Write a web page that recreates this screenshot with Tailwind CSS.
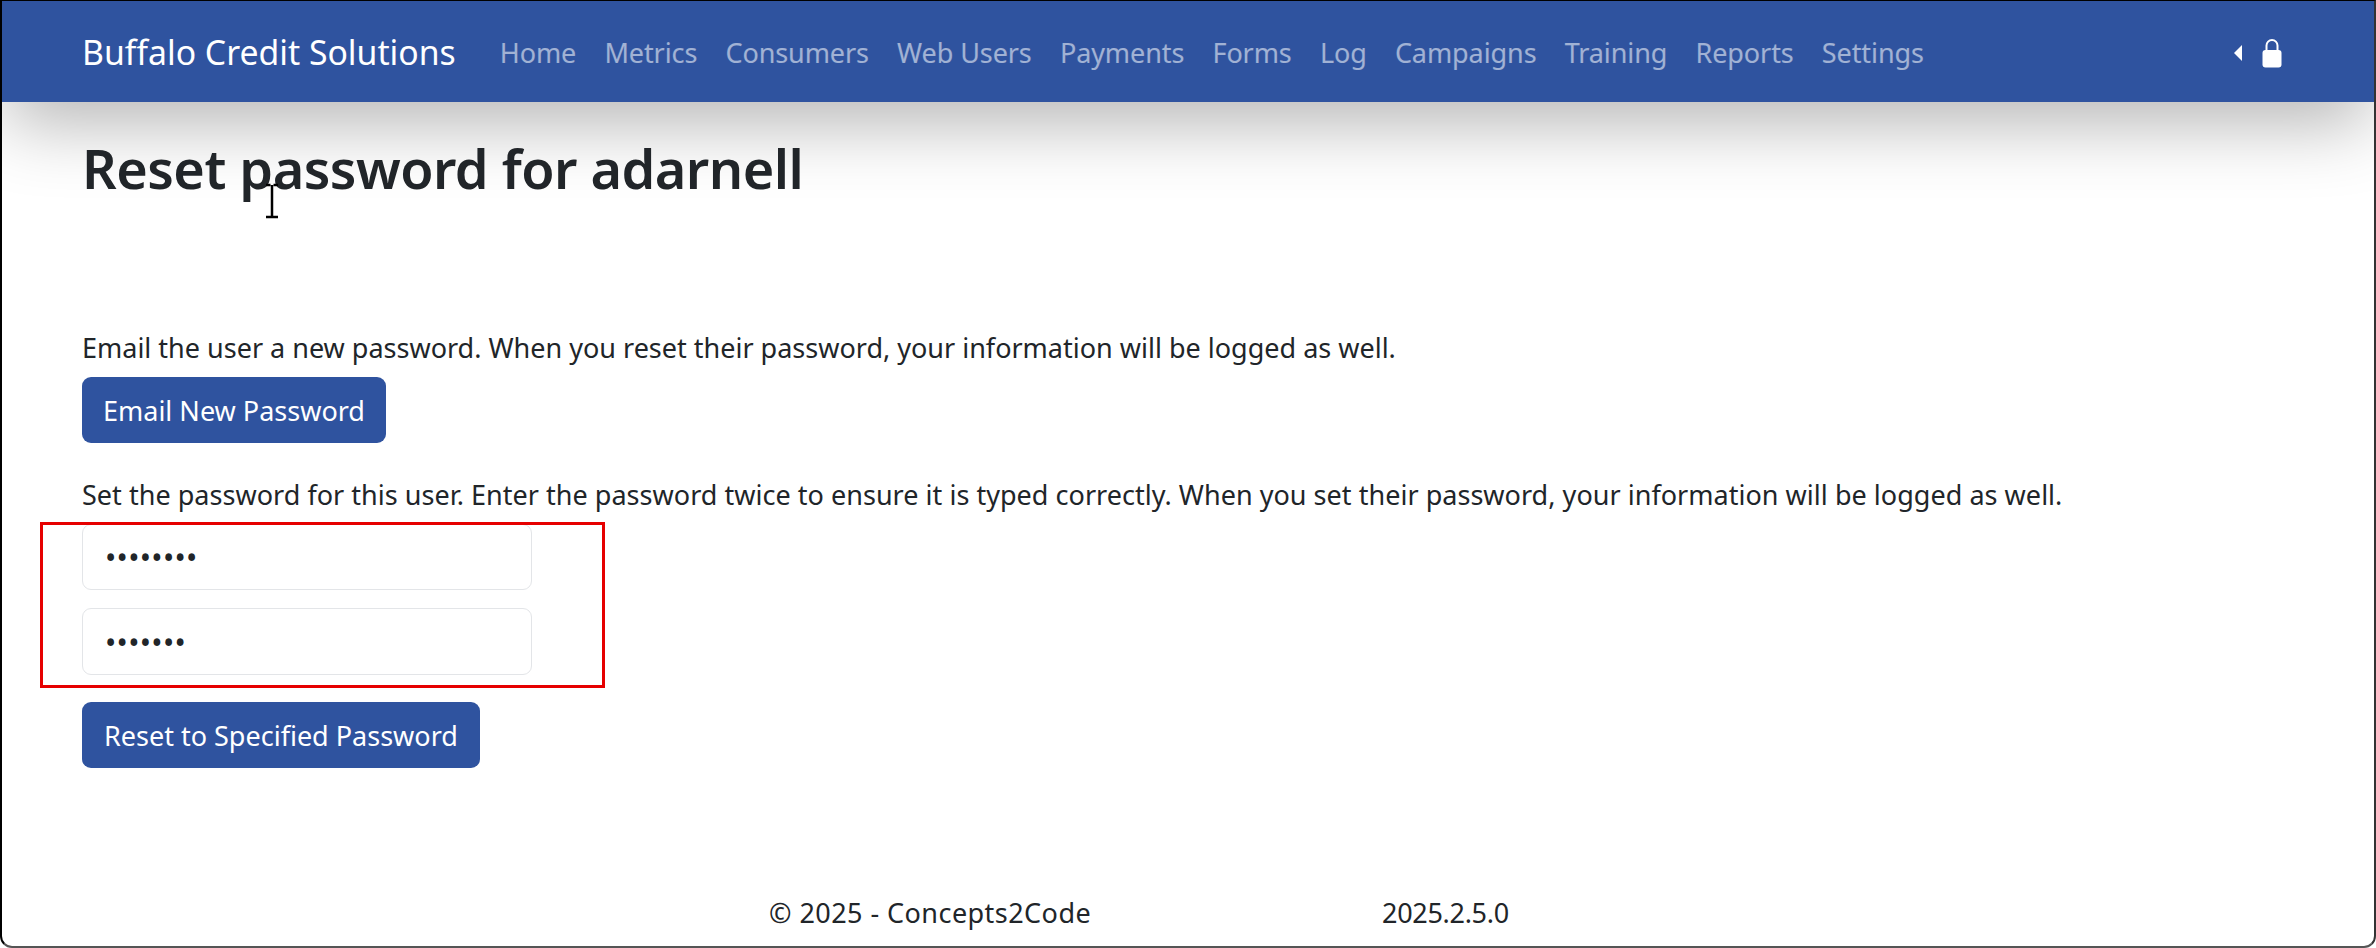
<!DOCTYPE html>
<html>
<head>
<meta charset="utf-8">
<script src="https://cdn.jsdelivr.net/npm/@tailwindcss/browser@4"></script>
</head>
<body class="bg-white">
<div class="relative h-[948px] w-[2376px] overflow-hidden rounded-b-[12px] border-t border-r-2 border-b-2 border-l-2 border-t-black border-r-[#333] border-b-[#555] border-l-black bg-white font-['Noto_Sans',sans-serif] text-[27px] text-[#212529]">
  <nav class="flex h-[101px] items-center bg-[#2f539f] pt-[2px] pr-[92px] pl-[80px] shadow-[0_24px_72px_-4px_rgba(0,0,0,0.3)]">
    <span class="text-[33.75px] leading-none text-white">Buffalo Credit Solutions</span>
    <div class="ml-[44px] flex flex-1 gap-[28.2px] leading-none tracking-[-0.09px] text-white/55">
      <span>Home</span><span>Metrics</span><span>Consumers</span><span>Web Users</span><span>Payments</span><span>Forms</span><span>Log</span><span>Campaigns</span><span>Training</span><span>Reports</span><span>Settings</span>
    </div>
    <div class="flex items-center gap-[20px]">
      <svg width="8" height="16" viewBox="0 0 8 16"><path d="M8 0V16L0 8Z" fill="#fff"/></svg>
      <svg width="20" height="30" viewBox="0 0 20 30"><path d="M4.500 14V7.500a5.500 5.500 0 0 1 11 0V14" fill="none" stroke="#fff" stroke-width="2"/><rect x="0.500" y="12" width="19" height="17.500" rx="3" fill="#fff"/></svg>
    </div>
  </nav>
  <main class="pl-[80px]">
    <h1 class="mt-[34px] text-[54px] leading-[1.2] font-semibold tracking-[-0.52px]">Reset password for adarnell</h1>
    <p class="mt-[129px] leading-[36px]">Email the user a new password. When you reset their password, your information will be logged as well.</p>
    <button class="mt-[11px] block h-[66px] rounded-[9px] bg-[#2f539f] px-[21px] pt-[2px] text-white">Email New Password</button>
    <p class="mt-[34px] leading-[36px] tracking-[0.03px]">Set the password for this user. Enter the password twice to ensure it is typed correctly. When you set their password, your information will be logged as well.</p>
    <div class="mt-[11px] flex h-[66px] w-[450px] items-center rounded-[9px] border border-[#e3e5e8] bg-white px-[22px] pt-[2px] text-[30px] tracking-[0.3px]">••••••••</div>
    <div class="mt-[18px] flex h-[67px] w-[450px] items-center rounded-[9px] border border-[#e3e5e8] bg-white px-[22px] pt-[2px] text-[30px] tracking-[0.3px]">•••••••</div>
    <button class="mt-[27px] block h-[66px] rounded-[9px] bg-[#2f539f] px-[22px] pt-[2px] text-white">Reset to Specified Password</button>
    <div class="mt-[127px] flex pl-[687px] leading-[36px]"><span class="w-[613px] tracking-[0.45px]">© 2025 - Concepts2Code</span><span class="tracking-[-0.3px]">2025.2.5.0</span></div>
  </main>
  <div class="absolute top-[521px] left-[38px] h-[166px] w-[565px] border-[3px] border-[#e60000]"></div>
  <svg class="absolute top-[182px] left-[262px]" width="16" height="36" viewBox="0 0 16 36"><path d="M2 2H6.500M9.500 2H14M8 2V34M2 34H14" stroke="#000" stroke-width="2.500" fill="none"/></svg>
</div>
</body>
</html>
